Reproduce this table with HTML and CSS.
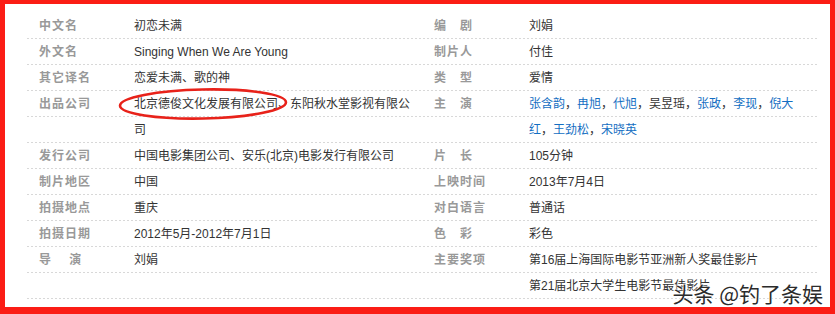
FILE: index.html
```html
<!DOCTYPE html>
<html lang="zh-CN">
<head>
<meta charset="utf-8">
<title>初恋未满</title>
<link rel="stylesheet" href="styles.css">
</head>
<body>
<div class="frame">
  <div class="info">
    <dl class="block">
      <div class="item"><dt class="name">中文名</dt><dd class="value">初恋未满</dd></div>
      <div class="item"><dt class="name">外文名</dt><dd class="value">Singing When We Are Young</dd></div>
      <div class="item"><dt class="name">其它译名</dt><dd class="value">恋爱未满、歌的神</dd></div>
      <div class="item"><dt class="name">出品公司</dt><dd class="value">北京德俊文化发展有限公司、东阳秋水堂影视有限公司<svg class="circle" width="174" height="34" viewBox="0 0 174 34"><ellipse cx="86" cy="17" rx="83" ry="14.5" fill="none" stroke="#e8221a" stroke-width="2.6" transform="rotate(-1.2 86 17)"/></svg></dd></div>
      <div class="item"><dt class="name">发行公司</dt><dd class="value">中国电影集团公司、安乐(北京)电影发行有限公司</dd></div>
      <div class="item"><dt class="name">制片地区</dt><dd class="value">中国</dd></div>
      <div class="item"><dt class="name">拍摄地点</dt><dd class="value">重庆</dd></div>
      <div class="item"><dt class="name">拍摄日期</dt><dd class="value">2012年5月-2012年7月1日</dd></div>
      <div class="item"><dt class="name">导&nbsp;&nbsp;&nbsp;&nbsp;演</dt><dd class="value">刘娟</dd></div>
    </dl>
    <dl class="block block-right">
      <div class="item"><dt class="name">编&nbsp;&nbsp;&nbsp;剧</dt><dd class="value">刘娟</dd></div>
      <div class="item"><dt class="name">制片人</dt><dd class="value">付佳</dd></div>
      <div class="item"><dt class="name">类&nbsp;&nbsp;&nbsp;型</dt><dd class="value">爱情</dd></div>
      <div class="item"><dt class="name">主&nbsp;&nbsp;&nbsp;演</dt><dd class="value"><a class="link">张含韵</a>，<a class="link">冉旭</a>，<a class="link">代旭</a>，吴昱瑶，<a class="link">张政</a>，<a class="link">李现</a>，<a class="link">倪大红</a>，<a class="link">王劲松</a>，<a class="link">宋晓英</a></dd></div>
      <div class="item"><dt class="name">片&nbsp;&nbsp;&nbsp;长</dt><dd class="value">105分钟</dd></div>
      <div class="item"><dt class="name">上映时间</dt><dd class="value">2013年7月4日</dd></div>
      <div class="item"><dt class="name">对白语言</dt><dd class="value">普通话</dd></div>
      <div class="item"><dt class="name">色&nbsp;&nbsp;&nbsp;彩</dt><dd class="value">彩色</dd></div>
      <div class="item"><dt class="name">主要奖项</dt><dd class="value"><div>第16届上海国际电影节亚洲新人奖最佳影片</div><div>第21届北京大学生电影节最佳影片</div></dd></div>
    </dl>
  </div>
  <div class="watermark">头条 @钓了条娱</div>
</div>
</body>
</html>
```
FILE: styles.css
```css
* {
  box-sizing: border-box;
}

html,
body {
  margin: 0;
  padding: 0;
}

body {
  width: 835px;
  height: 314px;
  overflow: hidden;
  background: #ffffff;
  font-family: "Liberation Sans", "Noto Sans CJK SC", sans-serif;
  font-size: 12px;
}

.frame {
  position: relative;
  width: 835px;
  height: 314px;
  border-style: solid;
  border-color: #fb1d15;
  border-width: 4px 5px 7px 5px;
  padding: 9px 13px 8px 22px;
  background: #ffffff;
}

.info {
  position: relative;
  z-index: 0;
  display: flex;
  width: 790px;
  height: 286px;
}

.info::before {
  content: "";
  position: absolute;
  inset: 0;
  z-index: -1;
  background: repeating-linear-gradient(to right, #d8d8d8 0 2px, transparent 2px 4px);
  -webkit-mask-image: repeating-linear-gradient(to bottom, transparent 0 25px, #000 25px 26px);
  mask-image: repeating-linear-gradient(to bottom, transparent 0 25px, #000 25px 26px);
}

.block {
  margin: 0;
  width: 395px;
}

.item {
  display: flex;
  line-height: 26px;
}

.name {
  flex: none;
  width: 107px;
  margin: 0;
  padding: 0 5px 0 12px;
  font-weight: bold;
  color: #999999;
  letter-spacing: 1px;
  white-space: nowrap;
}

.value {
  position: relative;
  flex: none;
  width: 280px;
  margin: 0;
  color: #333333;
}

.block-right .value {
  width: 270px;
}

.link {
  color: #136ec2;
  text-decoration: none;
}

.circle {
  position: absolute;
  left: -17px;
  top: -4px;
}

.watermark {
  position: absolute;
  right: 7px;
  bottom: 3px;
  font-family: "Noto Sans CJK SC", sans-serif;
  font-size: 21px;
  line-height: 1;
  color: #2b2b2b;
  text-shadow: 0 0 2px #ffffff, 0 0 1px #ffffff, 0 0 3px #ffffff;
  white-space: nowrap;
}
```
